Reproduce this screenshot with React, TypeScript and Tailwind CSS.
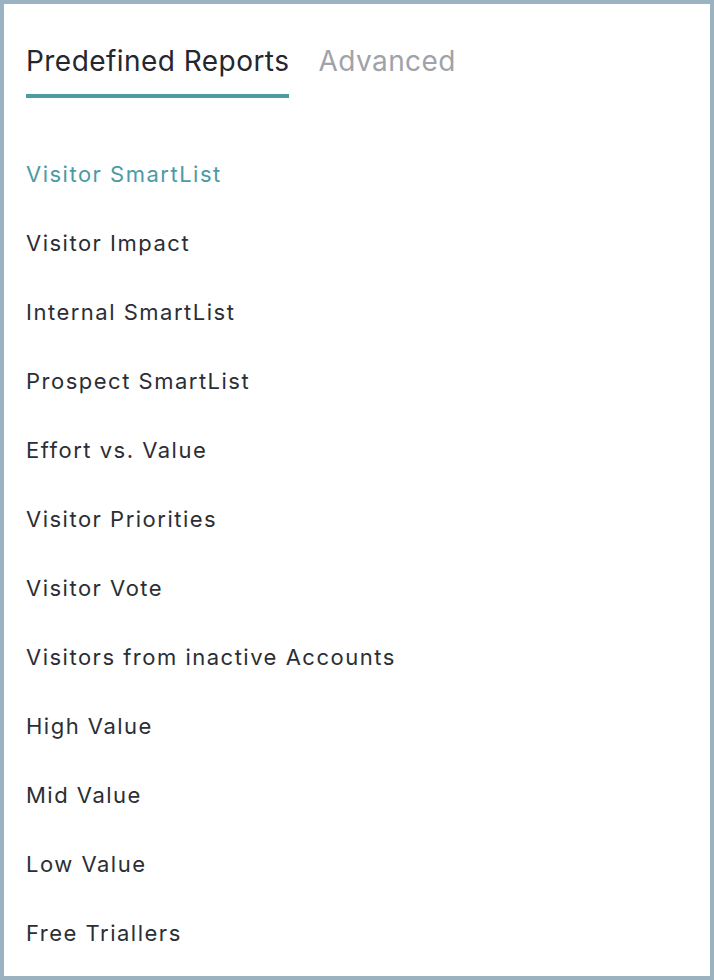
import { useState } from 'react';

const reports = [
    'Visitor SmartList',
    'Visitor Impact',
    'Internal SmartList',
    'Prospect SmartList',
    'Effort vs. Value',
    'Visitor Priorities',
    'Visitor Vote',
    'Visitors from inactive Accounts',
    'High Value',
    'Mid Value',
    'Low Value',
    'Free Triallers',
];

export default function App() {
    const [tab, setTab] = useState<'predefined' | 'advanced'>('predefined');
    const [selected, setSelected] = useState('Visitor SmartList');

    return (
        <div
            className="h-[980px] w-full border-4 border-[#9bb3c0] bg-white pl-[22px] pt-[40px]"
            style={{ fontFamily: 'Inter, "Noto Sans", sans-serif' }}
        >
            {/* Tabs */}
            <div className="flex items-start gap-[29px]">
                <button
                    onClick={() => setTab('predefined')}
                    className={`pb-4 text-[28px] leading-[34px] tracking-[0.45px] border-b-4 ${
                        tab === 'predefined'
                            ? 'text-[#24272e] border-[#4c9aa4]'
                            : 'text-[#9fa2a9] border-transparent'
                    }`}
                >
                    Predefined Reports
                </button>
                <button
                    onClick={() => setTab('advanced')}
                    className={`pb-4 text-[28px] leading-[34px] tracking-[0.45px] border-b-4 ${
                        tab === 'advanced'
                            ? 'text-[#24272e] border-[#4c9aa4]'
                            : 'text-[#9fa2a9] border-transparent'
                    }`}
                >
                    Advanced
                </button>
            </div>

            {/* Report list */}
            <ul className="mt-[42px] flex flex-col">
                {reports.map((name) => (
                    <li key={name}>
                        <button
                            onClick={() => setSelected(name)}
                            className={`h-[69px] text-left text-[22px] leading-[69px] tracking-[1.5px] ${
                                selected === name ? 'text-[#4c9aa4]' : 'text-[#2b2e35]'
                            }`}
                        >
                            {name}
                        </button>
                    </li>
                ))}
            </ul>
        </div>
    );
}
